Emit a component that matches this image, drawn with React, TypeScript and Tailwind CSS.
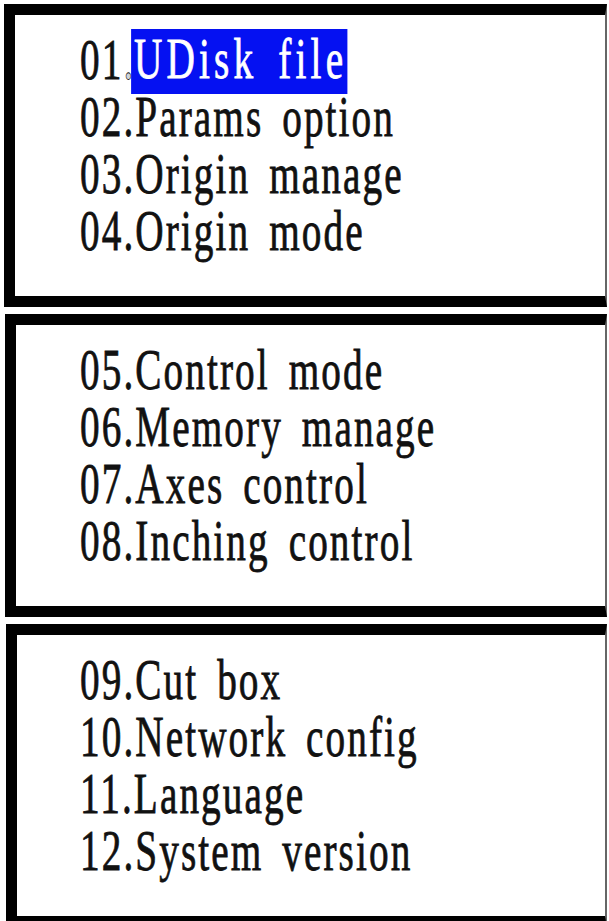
import React from 'react';

type Item = { no: string; label: string };

const GROUPS: { left: string; width: string; pad: string; items: Item[] }[] = [
  {
    left: 'ml-[4px]',
    width: 'w-[603px]',
    pad: 'pl-[65px]',
    items: [
      { no: '01', label: 'UDisk file' },
      { no: '02', label: 'Params option' },
      { no: '03', label: 'Origin manage' },
      { no: '04', label: 'Origin mode' },
    ],
  },
  {
    left: 'ml-[5px]',
    width: 'w-[602px]',
    pad: 'pl-[64px]',
    items: [
      { no: '05', label: 'Control mode' },
      { no: '06', label: 'Memory manage' },
      { no: '07', label: 'Axes control' },
      { no: '08', label: 'Inching control' },
    ],
  },
  {
    left: 'ml-[6px]',
    width: 'w-[601px]',
    pad: 'pl-[63px]',
    items: [
      { no: '09', label: 'Cut box' },
      { no: '10', label: 'Network config' },
      { no: '11', label: 'Language' },
      { no: '12', label: 'System version' },
    ],
  },
];

const MenuLine: React.FC<{ item: Item; active: boolean }> = ({ item, active }) => {
  if (active) {
    return (
      <div className="h-[57px] leading-[57px] whitespace-nowrap">
        <span>{item.no}</span>
        <span className="text-gray-300">.</span>
        <span className="inline-block -ml-[6px] pl-[4px] pr-[0px] h-[65px] leading-[61px] -mt-[3px] align-top bg-[#0511f2] text-white [-webkit-text-stroke:0.8px_#fff] tracking-[6px]">
          {item.label}
        </span>
      </div>
    );
  }
  return (
    <div className="h-[57px] leading-[57px] whitespace-nowrap">
      {item.no}.{item.label}
    </div>
  );
};

const App: React.FC = () => {
  return (
    <div className="w-[609px] h-[921px] overflow-hidden bg-white flex flex-col gap-[7px] pt-[4px]">
      {GROUPS.map((group, gi) => (
        <div
          key={gi}
          className={`${group.left} ${group.width} h-[303px] shrink-0 border-[11px] border-black border-r-[2px] border-r-[#666] bg-white ${group.pad} pt-[17px]`}
        >
          <div className="origin-left scale-x-[0.7] text-[56px] tracking-[3px] [word-spacing:10px] text-[#111] [-webkit-text-stroke:0.8px_#111] font-['Liberation_Serif',serif]">
            {group.items.map((item, i) => (
              <MenuLine key={item.no} item={item} active={gi === 0 && i === 0} />
            ))}
          </div>
        </div>
      ))}
    </div>
  );
};

export default App;
